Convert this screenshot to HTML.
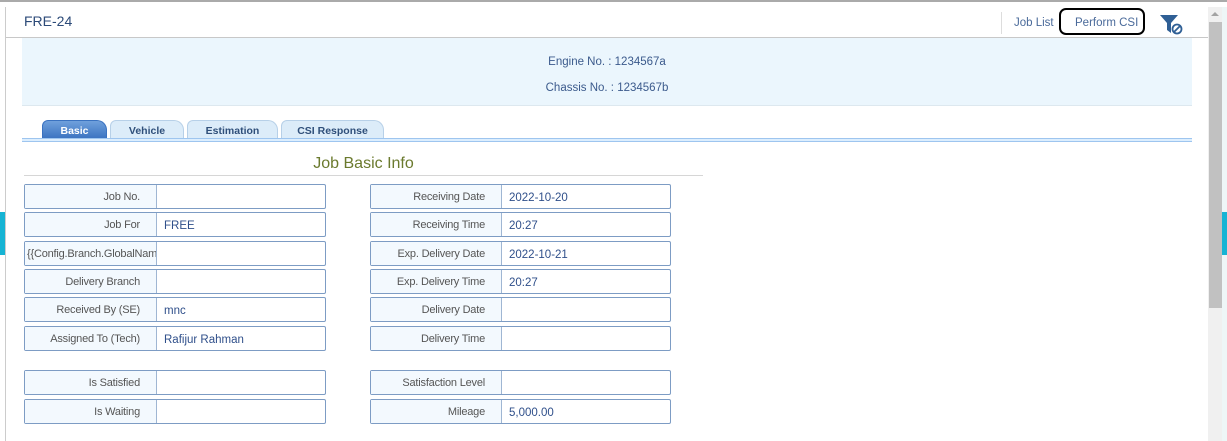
<!DOCTYPE html>
<html><head><meta charset="utf-8"><style>
body{margin:0;width:1227px;height:441px;overflow:hidden;background:#fff;font-family:"Liberation Sans",sans-serif;position:relative}
.a{position:absolute}
.lab{position:absolute;height:25px;border:1px solid #7d9cc4;border-radius:2px;background:#fff;box-sizing:border-box}
.lab .l{position:absolute;left:0;top:0;bottom:0;background:#f3f9fe;border-right:1px solid #9fb6d3;text-align:right;font-size:11px;color:#555;line-height:24px;padding-right:16px;box-sizing:border-box;white-space:nowrap;overflow:hidden;letter-spacing:-0.2px}
.lab .v{position:absolute;top:1px;font-size:11.5px;color:#2f4f8a;line-height:24px;padding-left:8px}
.tab{position:absolute;top:120px;height:19px;background:#dcecf9;border:1px solid #b7d0e8;border-bottom:none;border-radius:6px 10px 0 0;font-size:10.5px;font-weight:bold;color:#2f4f7a;text-align:center;line-height:21px;box-sizing:border-box}
</style></head><body>
<div class="a" style="left:0;top:0;width:1227px;height:2px;background:#aaa"></div>
<div class="a" style="left:5px;top:7px;width:1px;height:434px;background:#ccc"></div>
<div class="a" style="left:0;top:212px;width:5px;height:43px;background:#16b4d4"></div>
<div class="a" style="left:1222px;top:7px;width:5px;height:434px;background:#eef6f7"></div>
<div class="a" style="left:1222px;top:212px;width:5px;height:43px;background:#16b4d4"></div>
<div class="a" style="left:1208px;top:7px;width:14px;height:434px;background:#f0f0f0"></div>
<div class="a" style="left:1209px;top:22px;width:13px;height:286px;background:#c1c1c1"></div>
<div class="a" style="left:1211px;top:12px;width:0;height:0;border-left:4px solid transparent;border-right:4px solid transparent;border-bottom:4px solid #a3a3a3"></div>
<div class="a" style="left:6px;top:37px;width:1202px;height:1px;background:#c8c8c8"></div>
<div class="a" style="left:24px;top:13px;font-size:14px;color:#2c4a78">FRE-24</div>
<div class="a" style="left:1001px;top:12px;width:1px;height:22px;background:#ddd"></div>
<div class="a" style="left:1014px;top:17px;font-size:11.5px;color:#4a6a9a">Job List</div>
<div class="a" style="left:1059px;top:8px;width:86px;height:27px;border:2px solid #000;border-radius:7px;box-sizing:border-box"></div>
<div class="a" style="left:1075px;top:17px;font-size:11.5px;color:#4a6a9a">Perform CSI</div>
<svg class="a" style="left:1158px;top:13px" width="26" height="22" viewBox="0 0 26 22"><path d="M2 2H20L13 10V20L9 17V10Z" fill="#2f5f95"/><circle cx="19" cy="16" r="4.5" fill="#fff" stroke="#2f5f95" stroke-width="1.8"/><path d="M16 19L22 13" stroke="#2f5f95" stroke-width="1.8"/></svg>
<div class="a" style="left:22px;top:38px;width:1170px;height:67px;background:#ebf6fd;border-bottom:1px solid #dde8ef"></div>
<div class="a" style="left:22px;top:56px;width:1170px;text-align:center;font-size:11.5px;color:#3b5a8c">Engine No. : 1234567a</div>
<div class="a" style="left:22px;top:82px;width:1170px;text-align:center;font-size:11.5px;color:#3b5a8c">Chassis No. : 1234567b</div>
<div class="tab" style="left:42px;width:65px;background:linear-gradient(#6fa0dc,#3a72c0);color:#fff;border-color:#3a72c0">Basic</div>
<div class="tab" style="left:110px;width:74px">Vehicle</div>
<div class="tab" style="left:187px;width:91px">Estimation</div>
<div class="tab" style="left:281px;width:103px">CSI Response</div>
<div class="a" style="left:22px;top:138px;width:1170px;height:4px;border-top:1px solid #9ec5ef;border-bottom:1px solid #9ec5ef;background:#dceefe;box-sizing:border-box"></div>
<div class="a" style="left:24px;top:155px;width:679px;text-align:center;font-size:16px;color:#6b7a2e">Job Basic Info</div>
<div class="a" style="left:24px;top:175px;width:679px;height:1px;background:#d6d6d6"></div>

<div class="lab" style="left:24px;top:184px;width:302px"><div class="l" style="width:132px">Job No.</div></div>
<div class="lab" style="left:24px;top:212px;width:302px"><div class="l" style="width:132px">Job For</div><div class="v" style="left:131px">FREE</div></div>
<div class="lab" style="left:24px;top:241px;width:302px"><div class="l" style="width:132px;text-align:left;padding:0 0 0 2px">{{Config.Branch.GlobalName}}</div></div>
<div class="lab" style="left:24px;top:269px;width:302px"><div class="l" style="width:132px">Delivery Branch</div></div>
<div class="lab" style="left:24px;top:297px;width:302px"><div class="l" style="width:132px">Received By (SE)</div><div class="v" style="left:131px">mnc</div></div>
<div class="lab" style="left:24px;top:326px;width:302px"><div class="l" style="width:132px">Assigned To (Tech)</div><div class="v" style="left:131px">Rafijur Rahman</div></div>
<div class="lab" style="left:24px;top:370px;width:302px"><div class="l" style="width:132px">Is Satisfied</div></div>
<div class="lab" style="left:24px;top:399px;width:302px"><div class="l" style="width:132px">Is Waiting</div></div>

<div class="lab" style="left:370px;top:184px;width:301px"><div class="l" style="width:131px">Receiving Date</div><div class="v" style="left:130px">2022-10-20</div></div>
<div class="lab" style="left:370px;top:212px;width:301px"><div class="l" style="width:131px">Receiving Time</div><div class="v" style="left:130px">20:27</div></div>
<div class="lab" style="left:370px;top:241px;width:301px"><div class="l" style="width:131px">Exp. Delivery Date</div><div class="v" style="left:130px">2022-10-21</div></div>
<div class="lab" style="left:370px;top:269px;width:301px"><div class="l" style="width:131px">Exp. Delivery Time</div><div class="v" style="left:130px">20:27</div></div>
<div class="lab" style="left:370px;top:297px;width:301px"><div class="l" style="width:131px">Delivery Date</div></div>
<div class="lab" style="left:370px;top:326px;width:301px"><div class="l" style="width:131px">Delivery Time</div></div>
<div class="lab" style="left:370px;top:370px;width:301px"><div class="l" style="width:131px">Satisfaction Level</div></div>
<div class="lab" style="left:370px;top:399px;width:301px"><div class="l" style="width:131px">Mileage</div><div class="v" style="left:130px">5,000.00</div></div>
</body></html>
